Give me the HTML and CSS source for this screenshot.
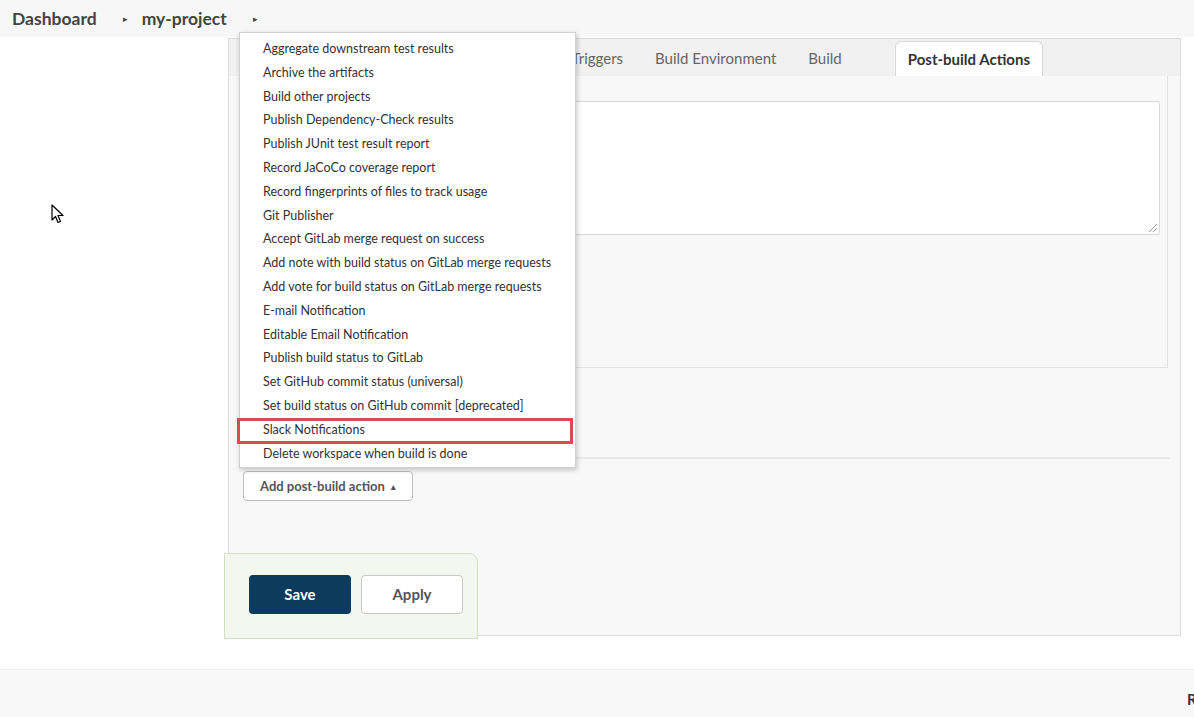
FILE: index.html
```html
<!DOCTYPE html>
<html>
<head>
<meta charset="utf-8">
<link rel="stylesheet" href="styles.css">
</head>
<body>
<header class="crumbs">
  <span class="crumb">Dashboard</span>
  <span class="sep">&#9656;</span>
  <span class="crumb">my-project</span>
  <span class="sep">&#9656;</span>
</header>
<main class="main">
  <section class="panel">
    <nav class="tabs">
      <span class="tab">Build Triggers</span>
      <span class="tab">Build Environment</span>
      <span class="tab">Build</span>
      <span class="tab active">Post-build Actions</span>
    </nav>
    <div class="content">
      <div class="section">
        <div class="textarea"><span class="grip"></span></div>
      </div>
      <div class="divider"></div>
      <button class="add-btn">Add post-build action <span class="caret">&#9652;</span></button>
    </div>
  </section>
  <div class="savebar">
    <button class="btn save">Save</button>
    <button class="btn apply">Apply</button>
  </div>
  <ul class="menu">
    <li>Aggregate downstream test results</li>
    <li>Archive the artifacts</li>
    <li>Build other projects</li>
    <li>Publish Dependency-Check results</li>
    <li>Publish JUnit test result report</li>
    <li>Record JaCoCo coverage report</li>
    <li>Record fingerprints of files to track usage</li>
    <li>Git Publisher</li>
    <li>Accept GitLab merge request on success</li>
    <li>Add note with build status on GitLab merge requests</li>
    <li>Add vote for build status on GitLab merge requests</li>
    <li>E-mail Notification</li>
    <li>Editable Email Notification</li>
    <li>Publish build status to GitLab</li>
    <li>Set GitHub commit status (universal)</li>
    <li>Set build status on GitHub commit [deprecated]</li>
    <li class="hl">Slack Notifications</li>
    <li>Delete workspace when build is done</li>
  </ul>
  <svg class="cursor" width="14" height="20" viewBox="0 0 14 20"><path d="M1 1 L1 16 L4.5 12.5 L7 18.5 L9.5 17.5 L7 11.5 L12 11.5 Z" fill="#fff" stroke="#000" stroke-width="1.2" stroke-linejoin="round"/></svg>
</main>
<footer class="footer"><span class="rest">R</span></footer>
</body>
</html>
```
FILE: styles.css
```css
* { box-sizing: border-box; }
html, body { margin: 0; padding: 0; }
body {
  width: 1194px;
  height: 717px;
  overflow: hidden;
  font-family: Lato, "Noto Sans", "Liberation Sans", sans-serif;
  background: #fff;
  color: #333;
}
.crumbs {
  height: 37px;
  background: #f7f7f7;
  display: flex;
  align-items: center;
  padding-left: 12px;
}
.crumb {
  font-size: 17.5px;
  font-weight: 700;
  color: #444;
}
.sep {
  font-size: 9px;
  color: #444;
  margin: 0 14px 0 26px;
}
.main {
  position: relative;
  height: 632px;
  padding: 1px 0 0 228px;
}
.panel {
  width: 953px;
  height: 598px;
  border: 1px solid #ddd;
  border-top-color: #d6d6d6;
  background: #f8f8f8;
  display: flex;
  flex-direction: column;
  overflow: hidden;
}
.tabs {
  height: 37px;
  flex: none;
  background: #f1f1f1;
  display: flex;
  align-items: flex-end;
  justify-content: flex-end;
  padding-right: 137px;
  white-space: nowrap;
}
.tab {
  font-size: 15px;
  color: #666;
  padding: 0 16px;
  height: 35px;
  line-height: 35px;
  flex: none;
}
.tab.active {
  margin-left: 37px;
  padding: 0 12px;
  background: #fff;
  border: 1px solid #d8d8d8;
  border-bottom: none;
  border-radius: 6px 6px 0 0;
  color: #333;
  font-weight: 700;
}
.content {
  flex: 1;
  padding: 0 12px 0 11px;
  display: flex;
  flex-direction: column;
}
.section {
  height: 292px;
  border: 1px solid #e2e2e2;
  border-top: none;
  padding: 25px 7px 0 0;
}
.textarea {
  position: relative;
  height: 134px;
  margin-left: 10px;
  background: #fff;
  border: 1px solid #d8d8d8;
  border-radius: 2px;
}
.grip {
  position: absolute;
  right: 2px;
  bottom: 2px;
  width: 10px;
  height: 10px;
  background: repeating-linear-gradient(135deg, transparent 0 2px, #999 2px 3px);
  clip-path: polygon(100% 0, 100% 100%, 0 100%);
}
.divider {
  margin-top: 89px;
  margin-right: -2px;
  border-top: 2px solid #e8e8e8;
}
.add-btn {
  align-self: flex-start;
  margin: 12px 0 0 3px;
  height: 30px;
  width: 170px;
  background: #fff;
  border: 1px solid #bdbdbd;
  border-radius: 4px;
  font-family: inherit;
  font-size: 13px;
  font-weight: 700;
  color: #555;
  padding: 0;
}
.caret { font-size: 9px; margin-left: 3px; vertical-align: 1px; }
.savebar {
  position: absolute;
  left: 224px;
  top: 516px;
  width: 254px;
  height: 86px;
  background: #f3f7f0;
  border: 1px solid #cfe0c5;
  border-radius: 0 9px 0 0;
  display: flex;
  align-items: center;
  gap: 10px;
  padding: 0 0 4px 24px;
}
.btn {
  width: 102px;
  height: 39px;
  border-radius: 4px;
  font-family: inherit;
  font-size: 15px;
  font-weight: 700;
  padding: 0;
}
.save { background: #0c3b5d; border: none; color: #fff; }
.apply { background: #fff; border: 1px solid #c8c8c8; color: #555; }
.menu {
  position: absolute;
  left: 239px;
  top: -5px;
  width: 337px;
  margin: 0;
  padding: 4px 0 0;
  list-style: none;
  background: #fff;
  border: 1px solid #d0d0d0;
  box-shadow: 1px 2px 5px rgba(0,0,0,0.22);
  height: 436px;
}
.menu li {
  position: relative;
  height: 23.8px;
  line-height: 23.8px;
  padding-left: 23px;
  font-size: 12.5px;
  color: #333;
  white-space: nowrap;
}
.menu li.hl::after {
  content: "";
  position: absolute;
  left: -3px;
  right: 2px;
  top: 0;
  bottom: -2px;
  border: 3px solid #da4a51;
}
.cursor {
  position: absolute;
  left: 51px;
  top: 167px;
}
.footer {
  height: 48px;
  background: #f8f8f8;
  border-top: 1px solid #efefef;
  position: relative;
  overflow: hidden;
}
.rest {
  position: absolute;
  left: 1187px;
  top: 20px;
  font-size: 15px;
  font-weight: 700;
  color: #333;
  white-space: nowrap;
}
```
